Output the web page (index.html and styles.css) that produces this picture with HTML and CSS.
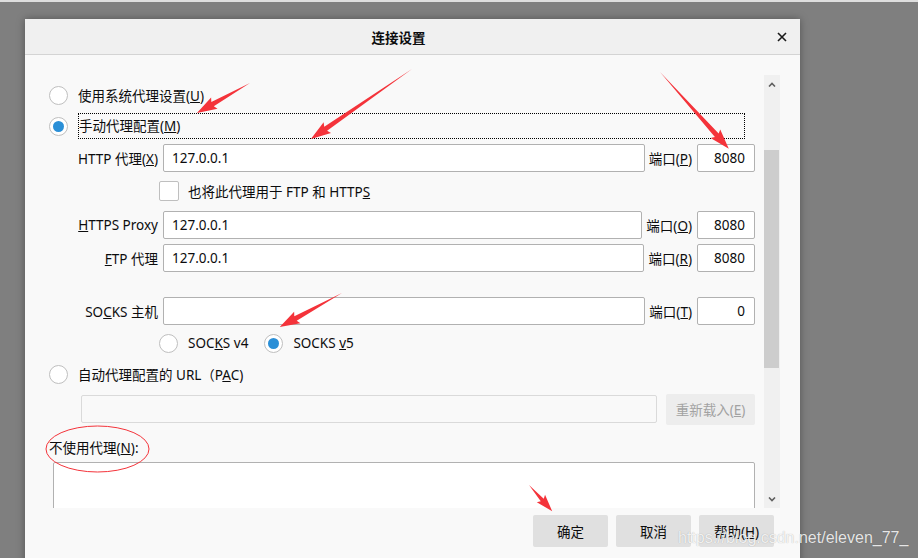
FILE: index.html
```html
<!DOCTYPE html>
<html lang="zh-CN">

<head>
    <meta charset="UTF-8">
    <meta name="viewport" content="width=device-width, initial-scale=1.0">
    <title>连接设置</title>
    <link rel="stylesheet" href="styles.css">
</head>

<body>
    <div class="topline"></div>
    <div class="dialog">
        <div class="dialog__head">
            <h1 class="dialog__title">连接设置</h1>
            <span class="dialog__close">
                <svg width="10" height="10" viewBox="0 0 10 10">
                    <path d="M1 1 L9 9 M9 1 L1 9" stroke="#1a1a1a" stroke-width="1.6" />
                </svg>
            </span>
        </div>
        <div class="dialog__body">
            <div class="pane">
                <div class="pane__content">
                    <div class="row">
                        <span class="radio"></span>
                        <span class="radio__label">使用系统代理设置(<u>U</u>)</span>
                    </div>
                    <div class="row row--gap3">
                        <span class="radio radio--on"></span>
                        <span class="radio__label radio__label--focus">手动代理配置(<u>M</u>)</span>
                    </div>

                    <div class="row row--field row--gap4">
                        <label class="field__label">HTTP 代理(<u>X</u>)</label>
                        <input type="text" class="field__input" value="127.0.0.1">
                        <label class="port__label">端口(<u>P</u>)</label>
                        <input type="text" class="port__input" value="8080">
                    </div>
                    <div class="row row--check">
                        <span class="checkbox"></span>
                        <span class="check__label">也将此代理用于 FTP 和 HTTP<u>S</u></span>
                    </div>
                    <div class="row row--field row--gap6">
                        <label class="field__label"><u>H</u>TTPS Proxy</label>
                        <input type="text" class="field__input" value="127.0.0.1">
                        <label class="port__label">端口(<u>O</u>)</label>
                        <input type="text" class="port__input" value="8080">
                    </div>
                    <div class="row row--field row--gap5">
                        <label class="field__label"><u>F</u>TP 代理</label>
                        <input type="text" class="field__input" value="127.0.0.1">
                        <label class="port__label">端口(<u>R</u>)</label>
                        <input type="text" class="port__input" value="8080">
                    </div>
                    <div class="row row--field row--gap25">
                        <label class="field__label">SO<u>C</u>KS 主机</label>
                        <input type="text" class="field__input" value="">
                        <label class="port__label">端口(<u>T</u>)</label>
                        <input type="text" class="port__input" value="0">
                    </div>
                    <div class="row row--socks row--gap4">
                        <span class="radio"></span>
                        <span class="radio__label">SOC<u>K</u>S v4</span>
                        <span class="radio radio--v5 radio--on"></span>
                        <span class="radio__label">SOCKS <u>v</u>5</span>
                    </div>

                    <div class="row row--gap3">
                        <span class="radio"></span>
                        <span class="radio__label">自动代理配置的 URL（P<u>A</u>C)</span>
                    </div>
                    <div class="row row--pac">
                        <input type="text" class="pac__input" disabled>
                        <button class="pac__reload" disabled>重新载入(<u>E</u>)</button>
                    </div>

                    <div class="noproxy__label">不使用代理(<u>N</u>):</div>
                    <textarea class="noproxy__input"></textarea>
                </div>
                <div class="scrollbar">
                    <span class="scrollbar__btn">
                        <svg width="8" height="5" viewBox="0 0 8 5">
                            <path d="M1 4.5 L4 1.5 L7 4.5" fill="none" stroke="#5f5f5f" stroke-width="1.6" />
                        </svg>
                    </span>
                    <div class="scrollbar__thumb"></div>
                    <span class="scrollbar__btn scrollbar__btn--down">
                        <svg width="8" height="5" viewBox="0 0 8 5">
                            <path d="M1 0.5 L4 3.5 L7 0.5" fill="none" stroke="#5f5f5f" stroke-width="1.6" />
                        </svg>
                    </span>
                </div>
            </div>
            <div class="dialog__footer">
                <button class="btn">确定</button>
                <button class="btn">取消</button>
                <button class="btn">帮助(<u>H</u>)</button>
            </div>
        </div>
    </div>

    <!-- red annotation marks drawn over the screenshot -->
    <svg class="marks" width="918" height="558" viewBox="0 0 918 558">
        <g fill="#f4333a">
            <polygon points="0,0 43,-2.5 41,-6.5 61,0 41,6.5 43,2.5" transform="translate(250,83) rotate(150.5)" />
            <polygon points="0,0 105,-2.5 103,-6.5 123,0 103,6.5 105,2.5" transform="translate(412,69) rotate(145.3)" />
            <polygon points="0,0 85,-2.5 83,-6.5 103,0 83,6.5 85,2.5" transform="translate(660,72) rotate(48.1)" />
            <polygon points="0,0 53,-2.5 51,-6.5 71,0 51,6.5 53,2.5" transform="translate(342,293) rotate(151.3)" />
            <polygon points="0,0 20,-2 18,-5.5 35,0 18,5.5 20,2" transform="translate(529,485) rotate(48.5)" />
        </g>
        <ellipse cx="97.5" cy="449" rx="51.5" ry="23" fill="none" stroke="#f4333a" stroke-width="1" />
    </svg>
    <div class="watermark">https://blog.csdn.net/eleven_77_</div>
</body>

</html>
```

FILE: styles.css
```css
* {
    margin: 0;
    padding: 0;
    box-sizing: border-box;
}

body {
    width: 918px;
    height: 558px;
    overflow: hidden;
    background: #7f7f7f;
    font-family: "Noto Sans", "Noto Sans CJK SC", sans-serif;
    font-size: 13.5px;
    color: #0c0c0d;
}

u {
    text-decoration: underline;
    text-underline-offset: 1px;
}

.topline {
    height: 2px;
    background: #dedede;
}

.dialog {
    width: 775px;
    height: 560px;
    margin: 17px 0 0 25px;
    background: #f9f9f9;
    box-shadow: 0 0 8px rgba(0, 0, 0, .35);
}

.dialog__head {
    display: flex;
    align-items: center;
    height: 36px;
    padding-left: 9px;
    background: #f0f0f0;
    border-bottom: 1px solid #d4d4d4;
}

.dialog__title {
    flex: 1;
    text-align: center;
    font-size: 13.5px;
    font-weight: bold;
}

.dialog__close {
    width: 37px;
    display: flex;
    justify-content: center;
    align-items: center;
}

.dialog__body {
    padding: 20px 20px 0 0;
}

.pane {
    display: flex;
    height: 433px;
}

.pane__content {
    flex: 1;
    overflow: hidden;
    padding: 6px 9px 0 24px;
}

.row {
    display: flex;
    align-items: center;
    height: 28px;
}

.row--gap3 { margin-top: 3px; }
.row--gap4 { margin-top: 4px; }
.row--gap5 { margin-top: 5px; }
.row--gap6 { margin-top: 6px; }
.row--gap25 { margin-top: 25px; }

.radio {
    width: 19px;
    height: 19px;
    flex: none;
    border: 1px solid #bfbfbf;
    border-radius: 50%;
    background: #fff;
    display: flex;
    justify-content: center;
    align-items: center;
}

.radio--on::after {
    content: "";
    width: 11px;
    height: 11px;
    border-radius: 50%;
    background: #2a8fd7;
}

.radio__label {
    margin-left: 10px;
    white-space: nowrap;
}

.radio__label--focus {
    flex: 1;
    height: 26px;
    line-height: 24px;
    border: 1px dotted #000;
    margin-right: 10px;
    margin-left: 10px;
}

.field__label {
    width: 109px;
    flex: none;
    text-align: right;
    margin-right: 5px;
    white-space: nowrap;
}

input[type=text],
textarea {
    font: inherit;
    color: inherit;
    outline: none;
    border: 1px solid #b1b1b1;
    border-radius: 2px;
    background: #fff;
}

.field__input {
    flex: 1;
    min-width: 0;
    height: 28px;
    padding: 0 8px;
}

.port__label {
    margin: 0 5px 0 4px;
    white-space: nowrap;
}

.port__input {
    width: 58px;
    flex: none;
    height: 28px;
    padding: 0 9px;
    text-align: right;
}

.row--check {
    margin-top: 5px;
    padding-left: 110px;
}

.checkbox {
    width: 20px;
    height: 20px;
    border: 1px solid #bfbfbf;
    border-radius: 2px;
    background: #fff;
}

.check__label {
    margin-left: 9px;
}

.row--socks {
    padding-left: 110px;
}

.radio--v5 {
    margin-left: 16px;
}

.row--pac {
    height: 32px;
    margin-top: 5px;
    padding-left: 32px;
}

input.pac__input {
    flex: 1;
    height: 28px;
    background: #f9f9f9;
    border-color: #dadada;
}

.pac__reload {
    width: 89px;
    height: 31px;
    margin-left: 9px;
    border: none;
    border-radius: 2px;
    background: #ededed;
    color: #a2a2a2;
    font: inherit;
}

.noproxy__label {
    margin-top: 10px;
    height: 26px;
    line-height: 26px;
}

.noproxy__input {
    display: block;
    width: calc(100% - 4px);
    height: 80px;
    margin: 1px 0 0 4px;
    resize: none;
}

.scrollbar {
    width: 16px;
    display: flex;
    flex-direction: column;
    background: #f0f0f0;
}

.scrollbar__btn {
    height: 18px;
    display: flex;
    justify-content: center;
    align-items: center;
}

.scrollbar__btn--down {
    margin-top: auto;
}

.scrollbar__thumb {
    height: 218px;
    margin: 57px 1px 0 0;
    background: #cdcdcd;
}

.dialog__footer {
    display: flex;
    justify-content: flex-end;
    gap: 8px;
    padding: 7px 6px 0 0;
}

.btn {
    width: 75px;
    height: 32px;
    border: none;
    border-radius: 2px;
    background: #e0e0e0;
    font: inherit;
    color: #0c0c0d;
}

.marks {
    position: absolute;
    left: 0;
    top: 0;
    pointer-events: none;
}

.watermark {
    position: absolute;
    left: 678px;
    top: 528px;
    font-family: "Liberation Sans", sans-serif;
    font-size: 16px;
    line-height: 20px;
    color: rgba(255, 255, 255, .85);
    text-shadow: 0 0 1px rgba(0, 0, 0, .3);
    white-space: nowrap;
}
```
